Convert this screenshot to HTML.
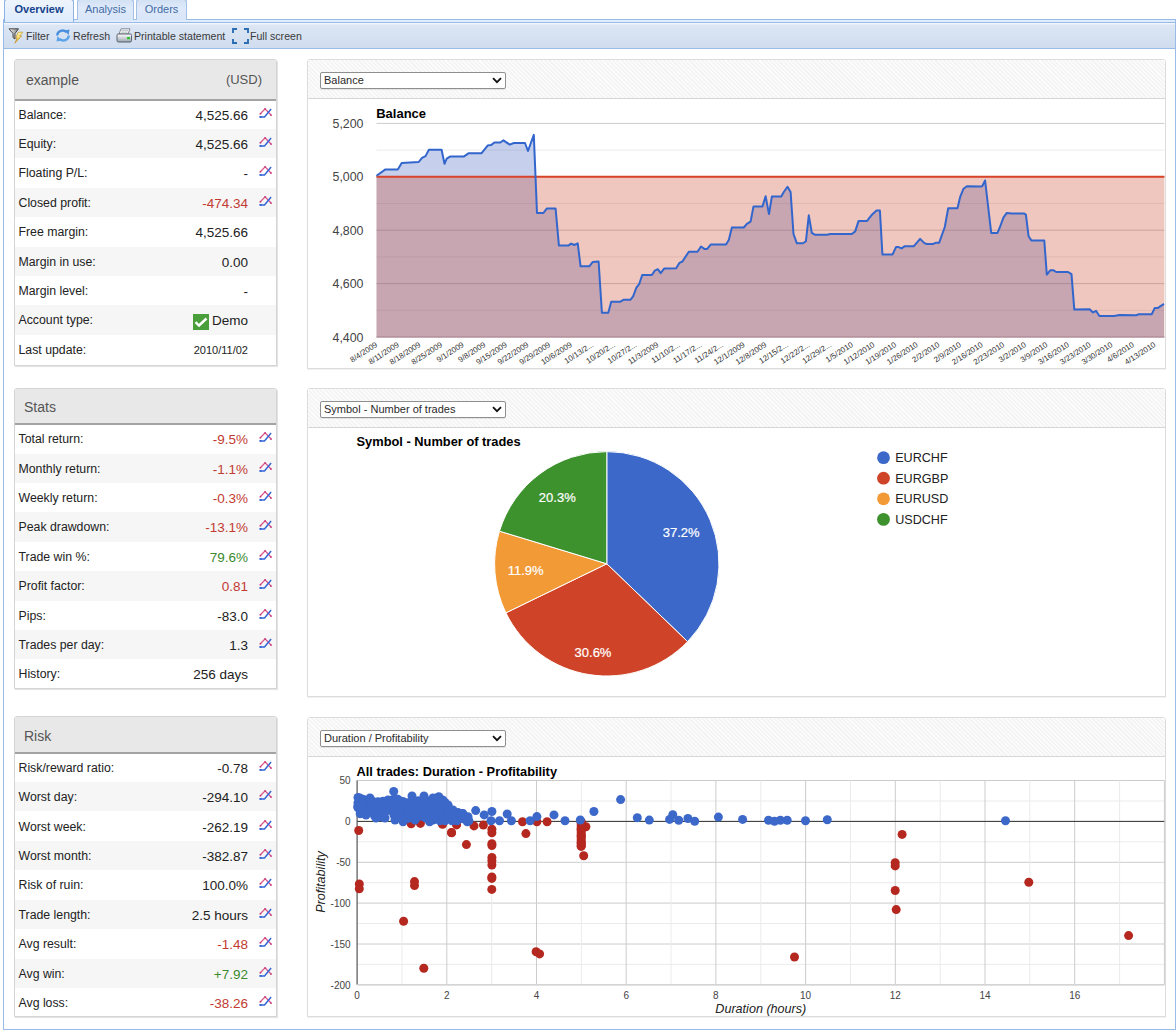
<!DOCTYPE html>
<html><head><meta charset="utf-8"><title>Overview</title><style>
*{box-sizing:border-box}
html,body{margin:0;padding:0}
body{width:1176px;height:1032px;overflow:hidden;position:relative;background:#fff;font-family:"Liberation Sans",sans-serif;color:#222}
.a{position:absolute}
.tab{position:absolute;top:-1px;height:21px;border:1px solid #a3c0e6;border-bottom:none;border-radius:3px 3px 0 0;background:linear-gradient(#d3e1f4,#dfeafa 40%,#d9e6f8);font-size:11px;color:#416aa3;text-align:center;line-height:19px}
.tab.act{background:linear-gradient(#eef4fc,#deecfd);color:#15428b;font-weight:bold;height:23px;z-index:3;border-color:#8db2e3}
.tb{font-size:10.6px;color:#3a3a3a;top:30px;line-height:13px}
.lp{position:absolute;left:14px;width:263px;border:1px solid #d4d4d4;border-radius:3px 3px 0 0;box-shadow:1px 1px 1px rgba(0,0,0,.12);background:#fff;overflow:hidden}
.lh{position:absolute;z-index:2;left:0;right:0;top:0;background:#e8e8e8;border-bottom:2px solid #a3a3a3;color:#555;font-size:14px}
.row{position:absolute;left:0;width:262px;height:29.4px;line-height:29.4px;font-size:12.3px}
.row.g{background:#f6f6f6}
.row .l{position:absolute;left:3.5px;top:1px;color:#222}
.row .v{position:absolute;right:29px;top:1px;font-size:13.5px;color:#222;text-align:right}
.row .v.r{color:#c23b32}
.row .v.gr{color:#3a8a2e}
.ic{position:absolute;left:244px;top:8px;width:14px;height:11px}
.rp{position:absolute;left:307px;width:859px;border:1px solid #dcdcdc;border-radius:3px 3px 0 0;background:#fff;box-shadow:0 1px 1px rgba(0,0,0,.06)}
.rh{position:absolute;left:0;right:0;top:0;border-bottom:1px solid #d6d6d6;background-color:#f8f8f8;background-image:repeating-linear-gradient(45deg,#fbfbfb 0 1.5px,#f4f4f4 1.5px 3px)}
.sel{position:absolute;left:12px;height:17px;border:1px solid #8f8f8f;border-radius:2px;background:#fff;font-size:11px;line-height:15px;padding-left:3px;color:#2a2a2a;box-shadow:0 1px 0 rgba(0,0,0,.08)}
.sel svg{position:absolute;right:3px;top:4px}
</style></head>
<body>
<div class="a" style="left:3px;top:19px;width:1173px;height:4px;background:#deecfd;border-top:1px solid #99bbe8;border-bottom:1px solid #99bbe8;border-left:1px solid #99bbe8;border-right:1px solid #99bbe8"></div><div class="tab act" style="left:4px;width:70px">Overview</div><div class="tab" style="left:77px;width:57px">Analysis</div><div class="tab" style="left:136px;width:51px">Orders</div><div class="a" style="left:3px;top:23px;width:1173px;height:26px;background:linear-gradient(#f2f6fc 0,#f2f6fc 1px,#dce6f4 2px,#d0ddef);border-left:1px solid #99bbe8;border-right:1px solid #99bbe8;border-bottom:1px solid #99bbe8"></div><div class="a" style="left:3px;top:49px;width:1173px;height:981px;border-left:1px solid #99bbe8;border-right:1px solid #99bbe8;border-bottom:1px solid #99bbe8"></div><svg class="a" style="left:8px;top:27px" width="16" height="17" viewBox="0 0 16 17"><defs><linearGradient id="fg" x1="0" y1="0" x2="1" y2="0"><stop offset="0" stop-color="#fafafa"/><stop offset="1" stop-color="#7a7a7a"/></linearGradient><linearGradient id="lg" x1="0" y1="0" x2="0" y2="1"><stop offset="0" stop-color="#fff6b0"/><stop offset="1" stop-color="#e8b830"/></linearGradient></defs>
<path d="M1,1.8 L10.5,1.8 L7,6.5 L7,12 L5,10.5 L5,6.5 Z" fill="url(#fg)" stroke="#3a3a3a" stroke-width="0.9"/>
<path d="M10.2,5.2 L14.8,5.2 L11.8,9 L13.6,9 L6.8,16.2 L9.2,11 L7.6,11 Z" fill="url(#lg)" stroke="#b8860b" stroke-width="0.6"/></svg>
<span class="a tb" style="left:26px">Filter</span>
<svg class="a" style="left:55px;top:28px" width="16" height="15" viewBox="0 0 16 15">
<path d="M2.2,7.5 C2.5,3 8,1 11.5,4.2" fill="none" stroke="#4a90dd" stroke-width="2.4"/><path d="M9.5,2.5 L14.5,1.5 L13.5,7 Z" fill="#4a90dd"/>
<path d="M13.8,7.5 C13.5,12 8,14 4.5,10.8" fill="none" stroke="#5aa2ea" stroke-width="2.4"/><path d="M6.5,12.5 L1.5,13.5 L2.5,8 Z" fill="#5aa2ea"/></svg>
<span class="a tb" style="left:73px">Refresh</span>
<svg class="a" style="left:116px;top:28px" width="16" height="15" viewBox="0 0 16 15"><defs><linearGradient id="pg" x1="0" y1="0" x2="0" y2="1"><stop offset="0" stop-color="#ffffff"/><stop offset="1" stop-color="#9aa3ad"/></linearGradient></defs>
<path d="M5,0.8 L14,0.8 L12,6 L3,6 Z" fill="#f6f6f6" stroke="#6b7280" stroke-width="0.8"/><path d="M5.5,2.6 L12,2.6 M5,4.2 L11.5,4.2" stroke="#9aa" stroke-width="0.6"/>
<path d="M2,6 L14.5,6 Q15.5,6 15.5,7.5 L15.5,12.5 Q15.5,14 14,14 L2.5,14 Q1,14 1,12.5 L1,7.5 Q1,6 2,6 Z" fill="url(#pg)" stroke="#4b5563" stroke-width="0.9"/>
<rect x="11" y="9" width="3" height="2.2" fill="#31c431"/></svg>
<span class="a tb" style="left:134px">Printable statement</span>
<svg class="a" style="left:232px;top:28px" width="17" height="16" viewBox="0 0 17 16" fill="none" stroke="#2a6db3" stroke-width="1.9">
<path d="M1,5 L1,1 L5,1 M12,1 L16,1 L16,5 M16,11 L16,15 L12,15 M5,15 L1,15 L1,11"/></svg>
<span class="a tb" style="left:250px">Full screen</span>
<div class="lp" style="top:59px;height:307px"><div class="lh" style="height:41px"><span class="a" style="left:11px;top:12px">example</span><span class="a" style="right:14px;top:12px;font-size:13px">(USD)</span></div><div class="row" style="top:39.60px"><span class="l">Balance:</span><span class="v ">4,525.66</span><svg class="ic" viewBox="0 0 14 11"><polyline points="1.3,5.7 6.1,0.9 12,7" fill="none" stroke="#d9548a" stroke-width="1.3"/><rect x="0.6" y="5" width="1.6" height="1.6" fill="#c63b78"/><rect x="5.3" y="0.2" width="1.6" height="1.6" fill="#c63b78"/><rect x="11.2" y="6.3" width="1.6" height="1.6" fill="#c63b78"/><polyline points="1,8.9 5.5,8.9 12.1,1" fill="none" stroke="#3566d6" stroke-width="1.5"/><rect x="0.4" y="8" width="2.2" height="1.8" fill="#3566d6"/></svg></div><div class="row g" style="top:69.00px"><span class="l">Equity:</span><span class="v ">4,525.66</span><svg class="ic" viewBox="0 0 14 11"><polyline points="1.3,5.7 6.1,0.9 12,7" fill="none" stroke="#d9548a" stroke-width="1.3"/><rect x="0.6" y="5" width="1.6" height="1.6" fill="#c63b78"/><rect x="5.3" y="0.2" width="1.6" height="1.6" fill="#c63b78"/><rect x="11.2" y="6.3" width="1.6" height="1.6" fill="#c63b78"/><polyline points="1,8.9 5.5,8.9 12.1,1" fill="none" stroke="#3566d6" stroke-width="1.5"/><rect x="0.4" y="8" width="2.2" height="1.8" fill="#3566d6"/></svg></div><div class="row" style="top:98.40px"><span class="l">Floating P/L:</span><span class="v ">-</span><svg class="ic" viewBox="0 0 14 11"><polyline points="1.3,5.7 6.1,0.9 12,7" fill="none" stroke="#d9548a" stroke-width="1.3"/><rect x="0.6" y="5" width="1.6" height="1.6" fill="#c63b78"/><rect x="5.3" y="0.2" width="1.6" height="1.6" fill="#c63b78"/><rect x="11.2" y="6.3" width="1.6" height="1.6" fill="#c63b78"/><polyline points="1,8.9 5.5,8.9 12.1,1" fill="none" stroke="#3566d6" stroke-width="1.5"/><rect x="0.4" y="8" width="2.2" height="1.8" fill="#3566d6"/></svg></div><div class="row g" style="top:127.80px"><span class="l">Closed profit:</span><span class="v r">-474.34</span><svg class="ic" viewBox="0 0 14 11"><polyline points="1.3,5.7 6.1,0.9 12,7" fill="none" stroke="#d9548a" stroke-width="1.3"/><rect x="0.6" y="5" width="1.6" height="1.6" fill="#c63b78"/><rect x="5.3" y="0.2" width="1.6" height="1.6" fill="#c63b78"/><rect x="11.2" y="6.3" width="1.6" height="1.6" fill="#c63b78"/><polyline points="1,8.9 5.5,8.9 12.1,1" fill="none" stroke="#3566d6" stroke-width="1.5"/><rect x="0.4" y="8" width="2.2" height="1.8" fill="#3566d6"/></svg></div><div class="row" style="top:157.20px"><span class="l">Free margin:</span><span class="v ">4,525.66</span></div><div class="row g" style="top:186.60px"><span class="l">Margin in use:</span><span class="v ">0.00</span></div><div class="row" style="top:216.00px"><span class="l">Margin level:</span><span class="v ">-</span></div><div class="row g" style="top:245.40px"><span class="l">Account type:</span><span class="v "><svg width="16" height="16" viewBox="0 0 16 16" style="position:relative;top:4.5px;margin-right:3px"><rect width="16" height="16" fill="#4a9f3b"/><polyline points="2.5,8.2 6,11.5 13.5,4.5" fill="none" stroke="#fff" stroke-width="2.4"/></svg>Demo</span></div><div class="row" style="top:274.80px"><span class="l">Last update:</span><span class="v "><span style="font-size:11px;position:relative;top:-1px">2010/11/02</span></span></div></div><div class="lp" style="top:388px;height:301px"><div class="lh" style="height:36px"><span class="a" style="left:9px;top:10px;font-size:14px">Stats</span></div><div class="row" style="top:35.20px"><span class="l">Total return:</span><span class="v r">-9.5%</span><svg class="ic" viewBox="0 0 14 11"><polyline points="1.3,5.7 6.1,0.9 12,7" fill="none" stroke="#d9548a" stroke-width="1.3"/><rect x="0.6" y="5" width="1.6" height="1.6" fill="#c63b78"/><rect x="5.3" y="0.2" width="1.6" height="1.6" fill="#c63b78"/><rect x="11.2" y="6.3" width="1.6" height="1.6" fill="#c63b78"/><polyline points="1,8.9 5.5,8.9 12.1,1" fill="none" stroke="#3566d6" stroke-width="1.5"/><rect x="0.4" y="8" width="2.2" height="1.8" fill="#3566d6"/></svg></div><div class="row g" style="top:64.60px"><span class="l">Monthly return:</span><span class="v r">-1.1%</span><svg class="ic" viewBox="0 0 14 11"><polyline points="1.3,5.7 6.1,0.9 12,7" fill="none" stroke="#d9548a" stroke-width="1.3"/><rect x="0.6" y="5" width="1.6" height="1.6" fill="#c63b78"/><rect x="5.3" y="0.2" width="1.6" height="1.6" fill="#c63b78"/><rect x="11.2" y="6.3" width="1.6" height="1.6" fill="#c63b78"/><polyline points="1,8.9 5.5,8.9 12.1,1" fill="none" stroke="#3566d6" stroke-width="1.5"/><rect x="0.4" y="8" width="2.2" height="1.8" fill="#3566d6"/></svg></div><div class="row" style="top:94.00px"><span class="l">Weekly return:</span><span class="v r">-0.3%</span><svg class="ic" viewBox="0 0 14 11"><polyline points="1.3,5.7 6.1,0.9 12,7" fill="none" stroke="#d9548a" stroke-width="1.3"/><rect x="0.6" y="5" width="1.6" height="1.6" fill="#c63b78"/><rect x="5.3" y="0.2" width="1.6" height="1.6" fill="#c63b78"/><rect x="11.2" y="6.3" width="1.6" height="1.6" fill="#c63b78"/><polyline points="1,8.9 5.5,8.9 12.1,1" fill="none" stroke="#3566d6" stroke-width="1.5"/><rect x="0.4" y="8" width="2.2" height="1.8" fill="#3566d6"/></svg></div><div class="row g" style="top:123.40px"><span class="l">Peak drawdown:</span><span class="v r">-13.1%</span><svg class="ic" viewBox="0 0 14 11"><polyline points="1.3,5.7 6.1,0.9 12,7" fill="none" stroke="#d9548a" stroke-width="1.3"/><rect x="0.6" y="5" width="1.6" height="1.6" fill="#c63b78"/><rect x="5.3" y="0.2" width="1.6" height="1.6" fill="#c63b78"/><rect x="11.2" y="6.3" width="1.6" height="1.6" fill="#c63b78"/><polyline points="1,8.9 5.5,8.9 12.1,1" fill="none" stroke="#3566d6" stroke-width="1.5"/><rect x="0.4" y="8" width="2.2" height="1.8" fill="#3566d6"/></svg></div><div class="row" style="top:152.80px"><span class="l">Trade win %:</span><span class="v gr">79.6%</span><svg class="ic" viewBox="0 0 14 11"><polyline points="1.3,5.7 6.1,0.9 12,7" fill="none" stroke="#d9548a" stroke-width="1.3"/><rect x="0.6" y="5" width="1.6" height="1.6" fill="#c63b78"/><rect x="5.3" y="0.2" width="1.6" height="1.6" fill="#c63b78"/><rect x="11.2" y="6.3" width="1.6" height="1.6" fill="#c63b78"/><polyline points="1,8.9 5.5,8.9 12.1,1" fill="none" stroke="#3566d6" stroke-width="1.5"/><rect x="0.4" y="8" width="2.2" height="1.8" fill="#3566d6"/></svg></div><div class="row g" style="top:182.20px"><span class="l">Profit factor:</span><span class="v r">0.81</span><svg class="ic" viewBox="0 0 14 11"><polyline points="1.3,5.7 6.1,0.9 12,7" fill="none" stroke="#d9548a" stroke-width="1.3"/><rect x="0.6" y="5" width="1.6" height="1.6" fill="#c63b78"/><rect x="5.3" y="0.2" width="1.6" height="1.6" fill="#c63b78"/><rect x="11.2" y="6.3" width="1.6" height="1.6" fill="#c63b78"/><polyline points="1,8.9 5.5,8.9 12.1,1" fill="none" stroke="#3566d6" stroke-width="1.5"/><rect x="0.4" y="8" width="2.2" height="1.8" fill="#3566d6"/></svg></div><div class="row" style="top:211.60px"><span class="l">Pips:</span><span class="v ">-83.0</span><svg class="ic" viewBox="0 0 14 11"><polyline points="1.3,5.7 6.1,0.9 12,7" fill="none" stroke="#d9548a" stroke-width="1.3"/><rect x="0.6" y="5" width="1.6" height="1.6" fill="#c63b78"/><rect x="5.3" y="0.2" width="1.6" height="1.6" fill="#c63b78"/><rect x="11.2" y="6.3" width="1.6" height="1.6" fill="#c63b78"/><polyline points="1,8.9 5.5,8.9 12.1,1" fill="none" stroke="#3566d6" stroke-width="1.5"/><rect x="0.4" y="8" width="2.2" height="1.8" fill="#3566d6"/></svg></div><div class="row g" style="top:241.00px"><span class="l">Trades per day:</span><span class="v ">1.3</span><svg class="ic" viewBox="0 0 14 11"><polyline points="1.3,5.7 6.1,0.9 12,7" fill="none" stroke="#d9548a" stroke-width="1.3"/><rect x="0.6" y="5" width="1.6" height="1.6" fill="#c63b78"/><rect x="5.3" y="0.2" width="1.6" height="1.6" fill="#c63b78"/><rect x="11.2" y="6.3" width="1.6" height="1.6" fill="#c63b78"/><polyline points="1,8.9 5.5,8.9 12.1,1" fill="none" stroke="#3566d6" stroke-width="1.5"/><rect x="0.4" y="8" width="2.2" height="1.8" fill="#3566d6"/></svg></div><div class="row" style="top:270.40px"><span class="l">History:</span><span class="v ">256 days</span></div></div><div class="lp" style="top:716px;height:301px"><div class="lh" style="height:37px"><span class="a" style="left:9px;top:11px;font-size:14px">Risk</span></div><div class="row" style="top:35.70px"><span class="l">Risk/reward ratio:</span><span class="v ">-0.78</span><svg class="ic" viewBox="0 0 14 11"><polyline points="1.3,5.7 6.1,0.9 12,7" fill="none" stroke="#d9548a" stroke-width="1.3"/><rect x="0.6" y="5" width="1.6" height="1.6" fill="#c63b78"/><rect x="5.3" y="0.2" width="1.6" height="1.6" fill="#c63b78"/><rect x="11.2" y="6.3" width="1.6" height="1.6" fill="#c63b78"/><polyline points="1,8.9 5.5,8.9 12.1,1" fill="none" stroke="#3566d6" stroke-width="1.5"/><rect x="0.4" y="8" width="2.2" height="1.8" fill="#3566d6"/></svg></div><div class="row g" style="top:65.10px"><span class="l">Worst day:</span><span class="v ">-294.10</span><svg class="ic" viewBox="0 0 14 11"><polyline points="1.3,5.7 6.1,0.9 12,7" fill="none" stroke="#d9548a" stroke-width="1.3"/><rect x="0.6" y="5" width="1.6" height="1.6" fill="#c63b78"/><rect x="5.3" y="0.2" width="1.6" height="1.6" fill="#c63b78"/><rect x="11.2" y="6.3" width="1.6" height="1.6" fill="#c63b78"/><polyline points="1,8.9 5.5,8.9 12.1,1" fill="none" stroke="#3566d6" stroke-width="1.5"/><rect x="0.4" y="8" width="2.2" height="1.8" fill="#3566d6"/></svg></div><div class="row" style="top:94.50px"><span class="l">Worst week:</span><span class="v ">-262.19</span><svg class="ic" viewBox="0 0 14 11"><polyline points="1.3,5.7 6.1,0.9 12,7" fill="none" stroke="#d9548a" stroke-width="1.3"/><rect x="0.6" y="5" width="1.6" height="1.6" fill="#c63b78"/><rect x="5.3" y="0.2" width="1.6" height="1.6" fill="#c63b78"/><rect x="11.2" y="6.3" width="1.6" height="1.6" fill="#c63b78"/><polyline points="1,8.9 5.5,8.9 12.1,1" fill="none" stroke="#3566d6" stroke-width="1.5"/><rect x="0.4" y="8" width="2.2" height="1.8" fill="#3566d6"/></svg></div><div class="row g" style="top:123.90px"><span class="l">Worst month:</span><span class="v ">-382.87</span><svg class="ic" viewBox="0 0 14 11"><polyline points="1.3,5.7 6.1,0.9 12,7" fill="none" stroke="#d9548a" stroke-width="1.3"/><rect x="0.6" y="5" width="1.6" height="1.6" fill="#c63b78"/><rect x="5.3" y="0.2" width="1.6" height="1.6" fill="#c63b78"/><rect x="11.2" y="6.3" width="1.6" height="1.6" fill="#c63b78"/><polyline points="1,8.9 5.5,8.9 12.1,1" fill="none" stroke="#3566d6" stroke-width="1.5"/><rect x="0.4" y="8" width="2.2" height="1.8" fill="#3566d6"/></svg></div><div class="row" style="top:153.30px"><span class="l">Risk of ruin:</span><span class="v ">100.0%</span><svg class="ic" viewBox="0 0 14 11"><polyline points="1.3,5.7 6.1,0.9 12,7" fill="none" stroke="#d9548a" stroke-width="1.3"/><rect x="0.6" y="5" width="1.6" height="1.6" fill="#c63b78"/><rect x="5.3" y="0.2" width="1.6" height="1.6" fill="#c63b78"/><rect x="11.2" y="6.3" width="1.6" height="1.6" fill="#c63b78"/><polyline points="1,8.9 5.5,8.9 12.1,1" fill="none" stroke="#3566d6" stroke-width="1.5"/><rect x="0.4" y="8" width="2.2" height="1.8" fill="#3566d6"/></svg></div><div class="row g" style="top:182.70px"><span class="l">Trade length:</span><span class="v ">2.5 hours</span><svg class="ic" viewBox="0 0 14 11"><polyline points="1.3,5.7 6.1,0.9 12,7" fill="none" stroke="#d9548a" stroke-width="1.3"/><rect x="0.6" y="5" width="1.6" height="1.6" fill="#c63b78"/><rect x="5.3" y="0.2" width="1.6" height="1.6" fill="#c63b78"/><rect x="11.2" y="6.3" width="1.6" height="1.6" fill="#c63b78"/><polyline points="1,8.9 5.5,8.9 12.1,1" fill="none" stroke="#3566d6" stroke-width="1.5"/><rect x="0.4" y="8" width="2.2" height="1.8" fill="#3566d6"/></svg></div><div class="row" style="top:212.10px"><span class="l">Avg result:</span><span class="v r">-1.48</span><svg class="ic" viewBox="0 0 14 11"><polyline points="1.3,5.7 6.1,0.9 12,7" fill="none" stroke="#d9548a" stroke-width="1.3"/><rect x="0.6" y="5" width="1.6" height="1.6" fill="#c63b78"/><rect x="5.3" y="0.2" width="1.6" height="1.6" fill="#c63b78"/><rect x="11.2" y="6.3" width="1.6" height="1.6" fill="#c63b78"/><polyline points="1,8.9 5.5,8.9 12.1,1" fill="none" stroke="#3566d6" stroke-width="1.5"/><rect x="0.4" y="8" width="2.2" height="1.8" fill="#3566d6"/></svg></div><div class="row g" style="top:241.50px"><span class="l">Avg win:</span><span class="v gr">+7.92</span><svg class="ic" viewBox="0 0 14 11"><polyline points="1.3,5.7 6.1,0.9 12,7" fill="none" stroke="#d9548a" stroke-width="1.3"/><rect x="0.6" y="5" width="1.6" height="1.6" fill="#c63b78"/><rect x="5.3" y="0.2" width="1.6" height="1.6" fill="#c63b78"/><rect x="11.2" y="6.3" width="1.6" height="1.6" fill="#c63b78"/><polyline points="1,8.9 5.5,8.9 12.1,1" fill="none" stroke="#3566d6" stroke-width="1.5"/><rect x="0.4" y="8" width="2.2" height="1.8" fill="#3566d6"/></svg></div><div class="row" style="top:270.90px"><span class="l">Avg loss:</span><span class="v r">-38.26</span><svg class="ic" viewBox="0 0 14 11"><polyline points="1.3,5.7 6.1,0.9 12,7" fill="none" stroke="#d9548a" stroke-width="1.3"/><rect x="0.6" y="5" width="1.6" height="1.6" fill="#c63b78"/><rect x="5.3" y="0.2" width="1.6" height="1.6" fill="#c63b78"/><rect x="11.2" y="6.3" width="1.6" height="1.6" fill="#c63b78"/><polyline points="1,8.9 5.5,8.9 12.1,1" fill="none" stroke="#3566d6" stroke-width="1.5"/><rect x="0.4" y="8" width="2.2" height="1.8" fill="#3566d6"/></svg></div></div><div class="rp" style="top:59px;height:310px"><div class="rh" style="height:39px"></div><div class="sel" style="top:12px;width:186px">Balance<svg width="10" height="7" viewBox="0 0 10 7"><polyline points="1,1.2 5,5.2 9,1.2" fill="none" stroke="#111" stroke-width="1.8"/></svg></div></div><div class="rp" style="top:388px;height:309px"><div class="rh" style="height:39px"></div><div class="sel" style="top:12px;width:186px">Symbol - Number of trades<svg width="10" height="7" viewBox="0 0 10 7"><polyline points="1,1.2 5,5.2 9,1.2" fill="none" stroke="#111" stroke-width="1.8"/></svg></div></div><div class="rp" style="top:717px;height:300px"><div class="rh" style="height:39px"></div><div class="sel" style="top:12px;width:186px">Duration / Profitability<svg width="10" height="7" viewBox="0 0 10 7"><polyline points="1,1.2 5,5.2 9,1.2" fill="none" stroke="#111" stroke-width="1.8"/></svg></div></div>
<svg class="a" style="left:0;top:0;z-index:5" width="1176" height="1032" viewBox="0 0 1176 1032" font-family="Liberation Sans, sans-serif"><line x1="376.5" x2="1164.4" y1="337.0" y2="337.0" stroke="#cccccc" stroke-width="1"/><line x1="376.5" x2="1164.4" y1="310.3" y2="310.3" stroke="#ebebeb" stroke-width="1"/><line x1="376.5" x2="1164.4" y1="283.6" y2="283.6" stroke="#cccccc" stroke-width="1"/><line x1="376.5" x2="1164.4" y1="256.9" y2="256.9" stroke="#ebebeb" stroke-width="1"/><line x1="376.5" x2="1164.4" y1="230.2" y2="230.2" stroke="#cccccc" stroke-width="1"/><line x1="376.5" x2="1164.4" y1="203.5" y2="203.5" stroke="#ebebeb" stroke-width="1"/><line x1="376.5" x2="1164.4" y1="176.8" y2="176.8" stroke="#cccccc" stroke-width="1"/><line x1="376.5" x2="1164.4" y1="150.1" y2="150.1" stroke="#ebebeb" stroke-width="1"/><line x1="376.5" x2="1164.4" y1="123.4" y2="123.4" stroke="#cccccc" stroke-width="1"/><text x="363.5" y="341.6" text-anchor="end" font-size="12.4" fill="#444">4,400</text><text x="363.5" y="288.2" text-anchor="end" font-size="12.4" fill="#444">4,600</text><text x="363.5" y="234.8" text-anchor="end" font-size="12.4" fill="#444">4,800</text><text x="363.5" y="181.4" text-anchor="end" font-size="12.4" fill="#444">5,000</text><text x="363.5" y="128.0" text-anchor="end" font-size="12.4" fill="#444">5,200</text><text x="376.2" y="117.8" font-size="13" font-weight="bold" fill="#000">Balance</text><polygon points="376.5,337.1 376.5,175.7 385.5,169.4 397.8,169.4 401.7,162.9 418.7,162.0 422.0,157.8 425.5,156.1 428.9,149.8 441.6,149.8 444.5,163.8 446.7,158.7 450.0,156.6 463.7,156.6 468.8,153.2 481.6,153.2 487.6,145.6 491.0,145.1 494.4,142.5 500.3,142.5 503.4,140.3 509.7,144.6 513.9,143.0 525.0,143.0 528.0,151.0 533.8,134.9 537.0,213.0 543.4,213.0 546.7,208.6 555.6,208.6 558.9,245.4 568.6,245.4 571.1,243.6 574.4,245.0 577.7,243.4 580.6,266.3 589.3,266.3 592.8,261.9 598.6,261.5 601.9,312.8 608.3,312.8 611.2,301.8 620.0,301.8 623.8,299.7 630.6,299.7 633.1,296.4 636.4,287.6 639.3,283.8 642.2,275.0 651.9,275.0 654.8,270.6 657.8,269.2 660.7,273.1 664.1,268.6 676.2,268.3 679.5,262.8 682.4,261.5 688.8,251.8 697.5,251.8 701.0,246.5 704.3,248.9 707.2,248.9 710.7,244.6 726.0,244.5 728.8,239.9 731.9,227.5 743.8,227.5 746.9,223.8 750.6,221.6 753.5,206.4 762.5,206.4 765.6,196.2 769.0,214.1 771.9,196.6 781.2,196.6 783.8,192.0 787.5,186.7 790.6,192.0 793.5,234.0 796.9,243.3 803.0,243.3 805.9,241.3 808.8,215.3 811.8,232.8 815.2,234.8 827.1,234.8 830.5,234.0 851.8,234.0 855.2,231.4 858.6,220.9 867.1,220.9 871.4,215.3 876.5,210.5 879.9,210.5 882.4,254.4 892.6,254.4 896.0,247.1 898.6,247.1 901.6,248.4 904.9,246.2 913.9,246.2 920.1,238.9 924.4,243.1 926.9,244.0 932.9,244.0 935.7,242.8 939.1,242.8 944.8,227.0 948.2,208.3 957.5,208.3 960.1,197.2 963.5,188.7 966.9,186.2 980.5,186.5 982.2,186.2 985.1,180.5 991.2,232.9 997.5,232.9 1000.0,227.0 1003.4,217.6 1006.8,212.9 1011.9,213.4 1023.8,213.4 1025.9,214.6 1028.6,236.3 1031.5,240.6 1044.3,240.6 1046.8,274.6 1050.2,270.3 1053.6,270.3 1056.2,272.0 1068.1,272.0 1071.5,274.1 1074.3,309.6 1089.6,309.3 1093.0,312.5 1096.0,310.8 1099.4,316.0 1114.2,316.0 1119.2,315.0 1136.0,315.2 1138.9,314.3 1151.7,314.3 1154.7,308.1 1157.6,308.1 1164.0,303.9 1164,337.1" fill="#4162c0" fill-opacity="0.3"/><rect x="376.5" y="176.8" width="787.9" height="160.3" fill="#ca442a" fill-opacity="0.3"/><line x1="376.5" x2="1164.4" y1="176.8" y2="176.8" stroke="#d8442a" stroke-width="2"/><polyline points="376.5,175.7 385.5,169.4 397.8,169.4 401.7,162.9 418.7,162.0 422.0,157.8 425.5,156.1 428.9,149.8 441.6,149.8 444.5,163.8 446.7,158.7 450.0,156.6 463.7,156.6 468.8,153.2 481.6,153.2 487.6,145.6 491.0,145.1 494.4,142.5 500.3,142.5 503.4,140.3 509.7,144.6 513.9,143.0 525.0,143.0 528.0,151.0 533.8,134.9 537.0,213.0 543.4,213.0 546.7,208.6 555.6,208.6 558.9,245.4 568.6,245.4 571.1,243.6 574.4,245.0 577.7,243.4 580.6,266.3 589.3,266.3 592.8,261.9 598.6,261.5 601.9,312.8 608.3,312.8 611.2,301.8 620.0,301.8 623.8,299.7 630.6,299.7 633.1,296.4 636.4,287.6 639.3,283.8 642.2,275.0 651.9,275.0 654.8,270.6 657.8,269.2 660.7,273.1 664.1,268.6 676.2,268.3 679.5,262.8 682.4,261.5 688.8,251.8 697.5,251.8 701.0,246.5 704.3,248.9 707.2,248.9 710.7,244.6 726.0,244.5 728.8,239.9 731.9,227.5 743.8,227.5 746.9,223.8 750.6,221.6 753.5,206.4 762.5,206.4 765.6,196.2 769.0,214.1 771.9,196.6 781.2,196.6 783.8,192.0 787.5,186.7 790.6,192.0 793.5,234.0 796.9,243.3 803.0,243.3 805.9,241.3 808.8,215.3 811.8,232.8 815.2,234.8 827.1,234.8 830.5,234.0 851.8,234.0 855.2,231.4 858.6,220.9 867.1,220.9 871.4,215.3 876.5,210.5 879.9,210.5 882.4,254.4 892.6,254.4 896.0,247.1 898.6,247.1 901.6,248.4 904.9,246.2 913.9,246.2 920.1,238.9 924.4,243.1 926.9,244.0 932.9,244.0 935.7,242.8 939.1,242.8 944.8,227.0 948.2,208.3 957.5,208.3 960.1,197.2 963.5,188.7 966.9,186.2 980.5,186.5 982.2,186.2 985.1,180.5 991.2,232.9 997.5,232.9 1000.0,227.0 1003.4,217.6 1006.8,212.9 1011.9,213.4 1023.8,213.4 1025.9,214.6 1028.6,236.3 1031.5,240.6 1044.3,240.6 1046.8,274.6 1050.2,270.3 1053.6,270.3 1056.2,272.0 1068.1,272.0 1071.5,274.1 1074.3,309.6 1089.6,309.3 1093.0,312.5 1096.0,310.8 1099.4,316.0 1114.2,316.0 1119.2,315.0 1136.0,315.2 1138.9,314.3 1151.7,314.3 1154.7,308.1 1157.6,308.1 1164.0,303.9" fill="none" stroke="#3366cc" stroke-width="2" stroke-linejoin="round"/><line x1="376.5" x2="1164.4" y1="337.1" y2="337.1" stroke="#b08a94" stroke-width="1"/><text transform="translate(378.0,346) rotate(-33)" text-anchor="end" font-size="7.9" fill="#333">8/4/2009</text><text transform="translate(399.6,346) rotate(-33)" text-anchor="end" font-size="7.9" fill="#333">8/11/2009</text><text transform="translate(421.2,346) rotate(-33)" text-anchor="end" font-size="7.9" fill="#333">8/18/2009</text><text transform="translate(442.9,346) rotate(-33)" text-anchor="end" font-size="7.9" fill="#333">8/25/2009</text><text transform="translate(464.5,346) rotate(-33)" text-anchor="end" font-size="7.9" fill="#333">9/1/2009</text><text transform="translate(486.1,346) rotate(-33)" text-anchor="end" font-size="7.9" fill="#333">9/8/2009</text><text transform="translate(507.7,346) rotate(-33)" text-anchor="end" font-size="7.9" fill="#333">9/15/2009</text><text transform="translate(529.3,346) rotate(-33)" text-anchor="end" font-size="7.9" fill="#333">9/22/2009</text><text transform="translate(551.0,346) rotate(-33)" text-anchor="end" font-size="7.9" fill="#333">9/29/2009</text><text transform="translate(572.6,346) rotate(-33)" text-anchor="end" font-size="7.9" fill="#333">10/6/2009</text><text transform="translate(594.2,346) rotate(-33)" text-anchor="end" font-size="7.9" fill="#333">10/13/2...</text><text transform="translate(615.8,346) rotate(-33)" text-anchor="end" font-size="7.9" fill="#333">10/20/2...</text><text transform="translate(637.4,346) rotate(-33)" text-anchor="end" font-size="7.9" fill="#333">10/27/2...</text><text transform="translate(659.1,346) rotate(-33)" text-anchor="end" font-size="7.9" fill="#333">11/3/2009</text><text transform="translate(680.7,346) rotate(-33)" text-anchor="end" font-size="7.9" fill="#333">11/10/2...</text><text transform="translate(702.3,346) rotate(-33)" text-anchor="end" font-size="7.9" fill="#333">11/17/2...</text><text transform="translate(723.9,346) rotate(-33)" text-anchor="end" font-size="7.9" fill="#333">11/24/2...</text><text transform="translate(745.5,346) rotate(-33)" text-anchor="end" font-size="7.9" fill="#333">12/1/2009</text><text transform="translate(767.2,346) rotate(-33)" text-anchor="end" font-size="7.9" fill="#333">12/8/2009</text><text transform="translate(788.8,346) rotate(-33)" text-anchor="end" font-size="7.9" fill="#333">12/15/2...</text><text transform="translate(810.4,346) rotate(-33)" text-anchor="end" font-size="7.9" fill="#333">12/22/2...</text><text transform="translate(832.0,346) rotate(-33)" text-anchor="end" font-size="7.9" fill="#333">12/29/2...</text><text transform="translate(853.6,346) rotate(-33)" text-anchor="end" font-size="7.9" fill="#333">1/5/2010</text><text transform="translate(875.3,346) rotate(-33)" text-anchor="end" font-size="7.9" fill="#333">1/12/2010</text><text transform="translate(896.9,346) rotate(-33)" text-anchor="end" font-size="7.9" fill="#333">1/19/2010</text><text transform="translate(918.5,346) rotate(-33)" text-anchor="end" font-size="7.9" fill="#333">1/26/2010</text><text transform="translate(940.1,346) rotate(-33)" text-anchor="end" font-size="7.9" fill="#333">2/2/2010</text><text transform="translate(961.7,346) rotate(-33)" text-anchor="end" font-size="7.9" fill="#333">2/9/2010</text><text transform="translate(983.4,346) rotate(-33)" text-anchor="end" font-size="7.9" fill="#333">2/16/2010</text><text transform="translate(1005.0,346) rotate(-33)" text-anchor="end" font-size="7.9" fill="#333">2/23/2010</text><text transform="translate(1026.6,346) rotate(-33)" text-anchor="end" font-size="7.9" fill="#333">3/2/2010</text><text transform="translate(1048.2,346) rotate(-33)" text-anchor="end" font-size="7.9" fill="#333">3/9/2010</text><text transform="translate(1069.8,346) rotate(-33)" text-anchor="end" font-size="7.9" fill="#333">3/16/2010</text><text transform="translate(1091.5,346) rotate(-33)" text-anchor="end" font-size="7.9" fill="#333">3/23/2010</text><text transform="translate(1113.1,346) rotate(-33)" text-anchor="end" font-size="7.9" fill="#333">3/30/2010</text><text transform="translate(1134.7,346) rotate(-33)" text-anchor="end" font-size="7.9" fill="#333">4/6/2010</text><text transform="translate(1156.3,346) rotate(-33)" text-anchor="end" font-size="7.9" fill="#333">4/13/2010</text><path d="M606.8,563.8 L606.80,451.60 A112.2,112.2 0 0 1 687.62,641.63 Z" fill="#3c69c9" stroke="#fff" stroke-width="1"/><path d="M606.8,563.8 L687.62,641.63 A112.2,112.2 0 0 1 505.89,612.84 Z" fill="#cf4428" stroke="#fff" stroke-width="1"/><path d="M606.8,563.8 L505.89,612.84 A112.2,112.2 0 0 1 499.46,531.15 Z" fill="#f19a36" stroke="#fff" stroke-width="1"/><path d="M606.8,563.8 L499.46,531.15 A112.2,112.2 0 0 1 606.80,451.60 Z" fill="#3d922e" stroke="#fff" stroke-width="1"/><text x="681.2" y="537" text-anchor="middle" font-size="13" fill="#fff" stroke="#fff" stroke-width="0.2">37.2%</text><text x="593" y="657" text-anchor="middle" font-size="13" fill="#fff" stroke="#fff" stroke-width="0.2">30.6%</text><text x="525.7" y="575" text-anchor="middle" font-size="13" fill="#fff" stroke="#fff" stroke-width="0.2">11.9%</text><text x="557.3" y="502" text-anchor="middle" font-size="13" fill="#fff" stroke="#fff" stroke-width="0.2">20.3%</text><text x="356.5" y="446.3" font-size="12.85" font-weight="bold" fill="#000">Symbol - Number of trades</text><circle cx="883.5" cy="457.7" r="6.4" fill="#3c69c9"/><text x="895.2" y="462.1" font-size="12.6" fill="#222">EURCHF</text><circle cx="883.5" cy="478.2" r="6.4" fill="#cf4428"/><text x="895.2" y="482.6" font-size="12.6" fill="#222">EURGBP</text><circle cx="883.5" cy="498.8" r="6.4" fill="#f19a36"/><text x="895.2" y="503.2" font-size="12.6" fill="#222">EURUSD</text><circle cx="883.5" cy="519.4" r="6.4" fill="#3d922e"/><text x="895.2" y="523.8" font-size="12.6" fill="#222">USDCHF</text><line x1="357.1" x2="1164.3" y1="984.8" y2="984.8" stroke="#cccccc"/><line x1="357.1" x2="1164.3" y1="964.4" y2="964.4" stroke="#ebebeb"/><line x1="357.1" x2="1164.3" y1="944.0" y2="944.0" stroke="#cccccc"/><line x1="357.1" x2="1164.3" y1="923.5" y2="923.5" stroke="#ebebeb"/><line x1="357.1" x2="1164.3" y1="903.1" y2="903.1" stroke="#cccccc"/><line x1="357.1" x2="1164.3" y1="882.7" y2="882.7" stroke="#ebebeb"/><line x1="357.1" x2="1164.3" y1="862.3" y2="862.3" stroke="#cccccc"/><line x1="357.1" x2="1164.3" y1="841.8" y2="841.8" stroke="#ebebeb"/><line x1="357.1" x2="1164.3" y1="821.4" y2="821.4" stroke="#cccccc"/><line x1="357.1" x2="1164.3" y1="801.0" y2="801.0" stroke="#ebebeb"/><line x1="357.1" x2="1164.3" y1="780.5" y2="780.5" stroke="#cccccc"/><line x1="402.0" x2="402.0" y1="780.5" y2="984.8" stroke="#ebebeb"/><line x1="446.8" x2="446.8" y1="780.5" y2="984.8" stroke="#cccccc"/><line x1="491.7" x2="491.7" y1="780.5" y2="984.8" stroke="#ebebeb"/><line x1="536.5" x2="536.5" y1="780.5" y2="984.8" stroke="#cccccc"/><line x1="581.4" x2="581.4" y1="780.5" y2="984.8" stroke="#ebebeb"/><line x1="626.2" x2="626.2" y1="780.5" y2="984.8" stroke="#cccccc"/><line x1="671.0" x2="671.0" y1="780.5" y2="984.8" stroke="#ebebeb"/><line x1="715.9" x2="715.9" y1="780.5" y2="984.8" stroke="#cccccc"/><line x1="760.8" x2="760.8" y1="780.5" y2="984.8" stroke="#ebebeb"/><line x1="805.6" x2="805.6" y1="780.5" y2="984.8" stroke="#cccccc"/><line x1="850.5" x2="850.5" y1="780.5" y2="984.8" stroke="#ebebeb"/><line x1="895.3" x2="895.3" y1="780.5" y2="984.8" stroke="#cccccc"/><line x1="940.2" x2="940.2" y1="780.5" y2="984.8" stroke="#ebebeb"/><line x1="985.0" x2="985.0" y1="780.5" y2="984.8" stroke="#cccccc"/><line x1="1029.8" x2="1029.8" y1="780.5" y2="984.8" stroke="#ebebeb"/><line x1="1074.7" x2="1074.7" y1="780.5" y2="984.8" stroke="#cccccc"/><line x1="1119.6" x2="1119.6" y1="780.5" y2="984.8" stroke="#ebebeb"/><line x1="1164.4" x2="1164.4" y1="780.5" y2="984.8" stroke="#cccccc"/><line x1="357.1" x2="1164.3" y1="821.4" y2="821.4" stroke="#333"/><line x1="357.1" x2="357.1" y1="780.5" y2="984.8" stroke="#555" stroke-width="1.2"/><line x1="357.1" x2="1164.3" y1="984.8" y2="984.8" stroke="#d4d4d4" stroke-width="1.5"/><text x="350.6" y="988.5" text-anchor="end" font-size="10" fill="#444">-200</text><text x="350.6" y="947.7" text-anchor="end" font-size="10" fill="#444">-150</text><text x="350.6" y="906.8" text-anchor="end" font-size="10" fill="#444">-100</text><text x="350.6" y="866.0" text-anchor="end" font-size="10" fill="#444">-50</text><text x="350.6" y="825.1" text-anchor="end" font-size="10" fill="#444">0</text><text x="350.6" y="784.2" text-anchor="end" font-size="10" fill="#444">50</text><text x="357.1" y="999" text-anchor="middle" font-size="10" fill="#444">0</text><text x="446.8" y="999" text-anchor="middle" font-size="10" fill="#444">2</text><text x="536.5" y="999" text-anchor="middle" font-size="10" fill="#444">4</text><text x="626.2" y="999" text-anchor="middle" font-size="10" fill="#444">6</text><text x="715.9" y="999" text-anchor="middle" font-size="10" fill="#444">8</text><text x="805.6" y="999" text-anchor="middle" font-size="10" fill="#444">10</text><text x="895.3" y="999" text-anchor="middle" font-size="10" fill="#444">12</text><text x="985.0" y="999" text-anchor="middle" font-size="10" fill="#444">14</text><text x="1074.7" y="999" text-anchor="middle" font-size="10" fill="#444">16</text><text x="356.5" y="775.5" font-size="12.8" font-weight="bold" fill="#000">All trades: Duration - Profitability</text><text x="760.8" y="1013" text-anchor="middle" font-size="12.6" font-style="italic" fill="#222">Duration (hours)</text><text transform="translate(324.5,882) rotate(-90)" text-anchor="middle" font-size="12.6" font-style="italic" fill="#222">Profitability</text><circle cx="358.7" cy="830.5" r="4.5" fill="#b5281f"/><circle cx="411.2" cy="823.7" r="4.5" fill="#b5281f"/><circle cx="420.4" cy="823.4" r="4.5" fill="#b5281f"/><circle cx="442.3" cy="823.7" r="4.5" fill="#b5281f"/><circle cx="451.5" cy="832.6" r="4.5" fill="#b5281f"/><circle cx="456.6" cy="824.9" r="4.5" fill="#b5281f"/><circle cx="442.6" cy="824.2" r="4.5" fill="#b5281f"/><circle cx="456.2" cy="823.4" r="4.5" fill="#b5281f"/><circle cx="451.6" cy="832.7" r="4.5" fill="#b5281f"/><circle cx="466.4" cy="844.6" r="4.5" fill="#b5281f"/><circle cx="474" cy="825.9" r="4.5" fill="#b5281f"/><circle cx="483.4" cy="825.1" r="4.5" fill="#b5281f"/><circle cx="491.9" cy="829.3" r="4.5" fill="#b5281f"/><circle cx="491.9" cy="832.7" r="4.5" fill="#b5281f"/><circle cx="491.9" cy="843.8" r="4.5" fill="#b5281f"/><circle cx="491.9" cy="845.5" r="4.5" fill="#b5281f"/><circle cx="491.9" cy="857.4" r="4.5" fill="#b5281f"/><circle cx="491.9" cy="860.8" r="4.5" fill="#b5281f"/><circle cx="491.9" cy="865" r="4.5" fill="#b5281f"/><circle cx="491.9" cy="877" r="4.5" fill="#b5281f"/><circle cx="522.5" cy="821.7" r="4.5" fill="#b5281f"/><circle cx="525.9" cy="833.6" r="4.5" fill="#b5281f"/><circle cx="536.9" cy="821.7" r="4.5" fill="#b5281f"/><circle cx="547.1" cy="821.7" r="4.5" fill="#b5281f"/><circle cx="581.2" cy="822.5" r="4.5" fill="#b5281f"/><circle cx="581.2" cy="829.3" r="4.5" fill="#b5281f"/><circle cx="581.2" cy="836.1" r="4.5" fill="#b5281f"/><circle cx="581.2" cy="842.9" r="4.5" fill="#b5281f"/><circle cx="581.2" cy="846.3" r="4.5" fill="#b5281f"/><circle cx="585.9" cy="826.8" r="4.5" fill="#b5281f"/><circle cx="583.7" cy="855.7" r="4.5" fill="#b5281f"/><circle cx="359.3" cy="884" r="4.5" fill="#b5281f"/><circle cx="359.3" cy="888.7" r="4.5" fill="#b5281f"/><circle cx="414.5" cy="881.6" r="4.5" fill="#b5281f"/><circle cx="414.5" cy="885.6" r="4.5" fill="#b5281f"/><circle cx="403.6" cy="921.2" r="4.5" fill="#b5281f"/><circle cx="423.8" cy="968.3" r="4.5" fill="#b5281f"/><circle cx="491.8" cy="878.4" r="4.5" fill="#b5281f"/><circle cx="491.8" cy="889.4" r="4.5" fill="#b5281f"/><circle cx="536.1" cy="951.7" r="4.5" fill="#b5281f"/><circle cx="539.6" cy="953.9" r="4.5" fill="#b5281f"/><circle cx="902.1" cy="834.4" r="4.5" fill="#b5281f"/><circle cx="895.2" cy="862.7" r="4.5" fill="#b5281f"/><circle cx="895.2" cy="865.9" r="4.5" fill="#b5281f"/><circle cx="895.2" cy="890.5" r="4.5" fill="#b5281f"/><circle cx="896.2" cy="909.6" r="4.5" fill="#b5281f"/><circle cx="1028.8" cy="882.3" r="4.5" fill="#b5281f"/><circle cx="794.5" cy="957" r="4.5" fill="#b5281f"/><circle cx="1128.6" cy="935.6" r="4.5" fill="#b5281f"/><circle cx="581.2" cy="822" r="4.5" fill="#b5281f"/><circle cx="581.2" cy="824" r="4.5" fill="#b5281f"/><circle cx="581.2" cy="826" r="4.5" fill="#b5281f"/><circle cx="581.2" cy="828" r="4.5" fill="#b5281f"/><circle cx="581.2" cy="830" r="4.5" fill="#b5281f"/><circle cx="581.2" cy="832" r="4.5" fill="#b5281f"/><circle cx="581.2" cy="834" r="4.5" fill="#b5281f"/><circle cx="581.2" cy="836" r="4.5" fill="#b5281f"/><circle cx="581.2" cy="838" r="4.5" fill="#b5281f"/><circle cx="581.2" cy="840" r="4.5" fill="#b5281f"/><circle cx="581.2" cy="842" r="4.5" fill="#b5281f"/><circle cx="581.2" cy="844" r="4.5" fill="#b5281f"/><circle cx="581.2" cy="846" r="4.5" fill="#b5281f"/><circle cx="358.0" cy="797.4" r="4.5" fill="#3c68c9"/><circle cx="358.0" cy="802.6" r="4.5" fill="#3c68c9"/><circle cx="358.0" cy="807.8" r="4.5" fill="#3c68c9"/><circle cx="363.0" cy="799.2" r="4.5" fill="#3c68c9"/><circle cx="363.0" cy="804.4" r="4.5" fill="#3c68c9"/><circle cx="363.0" cy="809.6" r="4.5" fill="#3c68c9"/><circle cx="368.0" cy="801.0" r="4.5" fill="#3c68c9"/><circle cx="368.0" cy="806.2" r="4.5" fill="#3c68c9"/><circle cx="368.0" cy="811.4" r="4.5" fill="#3c68c9"/><circle cx="373.0" cy="801.4" r="4.5" fill="#3c68c9"/><circle cx="373.0" cy="806.6" r="4.5" fill="#3c68c9"/><circle cx="373.0" cy="811.8" r="4.5" fill="#3c68c9"/><circle cx="378.0" cy="801.8" r="4.5" fill="#3c68c9"/><circle cx="378.0" cy="807.0" r="4.5" fill="#3c68c9"/><circle cx="378.0" cy="812.2" r="4.5" fill="#3c68c9"/><circle cx="383.0" cy="801.2" r="4.5" fill="#3c68c9"/><circle cx="383.0" cy="806.5" r="4.5" fill="#3c68c9"/><circle cx="383.0" cy="811.7" r="4.5" fill="#3c68c9"/><circle cx="388.0" cy="800.0" r="4.5" fill="#3c68c9"/><circle cx="388.0" cy="805.2" r="4.5" fill="#3c68c9"/><circle cx="388.0" cy="810.4" r="4.5" fill="#3c68c9"/><circle cx="393.0" cy="799.4" r="4.5" fill="#3c68c9"/><circle cx="393.0" cy="804.6" r="4.5" fill="#3c68c9"/><circle cx="393.0" cy="809.8" r="4.5" fill="#3c68c9"/><circle cx="398.0" cy="799.4" r="4.5" fill="#3c68c9"/><circle cx="398.0" cy="804.6" r="4.5" fill="#3c68c9"/><circle cx="398.0" cy="809.8" r="4.5" fill="#3c68c9"/><circle cx="398.0" cy="815.0" r="4.5" fill="#3c68c9"/><circle cx="403.0" cy="801.4" r="4.5" fill="#3c68c9"/><circle cx="403.0" cy="806.6" r="4.5" fill="#3c68c9"/><circle cx="403.0" cy="811.8" r="4.5" fill="#3c68c9"/><circle cx="403.0" cy="817.0" r="4.5" fill="#3c68c9"/><circle cx="408.0" cy="802.8" r="4.5" fill="#3c68c9"/><circle cx="408.0" cy="808.0" r="4.5" fill="#3c68c9"/><circle cx="408.0" cy="813.2" r="4.5" fill="#3c68c9"/><circle cx="408.0" cy="818.4" r="4.5" fill="#3c68c9"/><circle cx="413.0" cy="801.9" r="4.5" fill="#3c68c9"/><circle cx="413.0" cy="807.1" r="4.5" fill="#3c68c9"/><circle cx="413.0" cy="812.3" r="4.5" fill="#3c68c9"/><circle cx="413.0" cy="817.5" r="4.5" fill="#3c68c9"/><circle cx="418.0" cy="801.0" r="4.5" fill="#3c68c9"/><circle cx="418.0" cy="806.2" r="4.5" fill="#3c68c9"/><circle cx="418.0" cy="811.4" r="4.5" fill="#3c68c9"/><circle cx="418.0" cy="816.6" r="4.5" fill="#3c68c9"/><circle cx="423.0" cy="801.0" r="4.5" fill="#3c68c9"/><circle cx="423.0" cy="806.2" r="4.5" fill="#3c68c9"/><circle cx="423.0" cy="811.4" r="4.5" fill="#3c68c9"/><circle cx="423.0" cy="816.6" r="4.5" fill="#3c68c9"/><circle cx="428.0" cy="801.0" r="4.5" fill="#3c68c9"/><circle cx="428.0" cy="806.2" r="4.5" fill="#3c68c9"/><circle cx="428.0" cy="811.4" r="4.5" fill="#3c68c9"/><circle cx="428.0" cy="816.6" r="4.5" fill="#3c68c9"/><circle cx="433.0" cy="799.2" r="4.5" fill="#3c68c9"/><circle cx="433.0" cy="804.4" r="4.5" fill="#3c68c9"/><circle cx="433.0" cy="809.6" r="4.5" fill="#3c68c9"/><circle cx="433.0" cy="814.8" r="4.5" fill="#3c68c9"/><circle cx="433.0" cy="820.0" r="4.5" fill="#3c68c9"/><circle cx="438.0" cy="797.4" r="4.5" fill="#3c68c9"/><circle cx="438.0" cy="802.6" r="4.5" fill="#3c68c9"/><circle cx="438.0" cy="807.8" r="4.5" fill="#3c68c9"/><circle cx="438.0" cy="813.0" r="4.5" fill="#3c68c9"/><circle cx="438.0" cy="818.2" r="4.5" fill="#3c68c9"/><circle cx="443.0" cy="800.3" r="4.5" fill="#3c68c9"/><circle cx="443.0" cy="805.5" r="4.5" fill="#3c68c9"/><circle cx="443.0" cy="810.7" r="4.5" fill="#3c68c9"/><circle cx="443.0" cy="815.9" r="4.5" fill="#3c68c9"/><circle cx="448.0" cy="805.0" r="4.5" fill="#3c68c9"/><circle cx="448.0" cy="810.2" r="4.5" fill="#3c68c9"/><circle cx="448.0" cy="815.4" r="4.5" fill="#3c68c9"/><circle cx="453.0" cy="810.0" r="4.5" fill="#3c68c9"/><circle cx="453.0" cy="815.2" r="4.5" fill="#3c68c9"/><circle cx="458.0" cy="812.4" r="4.5" fill="#3c68c9"/><circle cx="458.0" cy="817.6" r="4.5" fill="#3c68c9"/><circle cx="463.0" cy="813.6" r="4.5" fill="#3c68c9"/><circle cx="463.0" cy="818.8" r="4.5" fill="#3c68c9"/><circle cx="468.0" cy="816.8" r="4.5" fill="#3c68c9"/><circle cx="393.7" cy="791.4" r="4.5" fill="#3c68c9"/><circle cx="396.9" cy="798.9" r="4.5" fill="#3c68c9"/><circle cx="359.7" cy="797.9" r="4.5" fill="#3c68c9"/><circle cx="357.7" cy="806.5" r="4.5" fill="#3c68c9"/><circle cx="360.2" cy="813.7" r="4.5" fill="#3c68c9"/><circle cx="367.9" cy="801.9" r="4.5" fill="#3c68c9"/><circle cx="374.5" cy="815.7" r="4.5" fill="#3c68c9"/><circle cx="381.6" cy="802.4" r="4.5" fill="#3c68c9"/><circle cx="381.6" cy="816.7" r="4.5" fill="#3c68c9"/><circle cx="388.3" cy="800.4" r="4.5" fill="#3c68c9"/><circle cx="393.9" cy="814.7" r="4.5" fill="#3c68c9"/><circle cx="407.1" cy="803.5" r="4.5" fill="#3c68c9"/><circle cx="403.1" cy="821.8" r="4.5" fill="#3c68c9"/><circle cx="418.4" cy="800.9" r="4.5" fill="#3c68c9"/><circle cx="427.6" cy="801.4" r="4.5" fill="#3c68c9"/><circle cx="438.8" cy="796.8" r="4.5" fill="#3c68c9"/><circle cx="444.9" cy="802.4" r="4.5" fill="#3c68c9"/><circle cx="429.6" cy="821.8" r="4.5" fill="#3c68c9"/><circle cx="421.4" cy="813.7" r="4.5" fill="#3c68c9"/><circle cx="439.8" cy="820.8" r="4.5" fill="#3c68c9"/><circle cx="462.2" cy="813.7" r="4.5" fill="#3c68c9"/><circle cx="452" cy="820.8" r="4.5" fill="#3c68c9"/><circle cx="467.3" cy="821.8" r="4.5" fill="#3c68c9"/><circle cx="365" cy="808" r="4.5" fill="#3c68c9"/><circle cx="372" cy="806" r="4.5" fill="#3c68c9"/><circle cx="385" cy="810" r="4.5" fill="#3c68c9"/><circle cx="398" cy="808" r="4.5" fill="#3c68c9"/><circle cx="410" cy="812" r="4.5" fill="#3c68c9"/><circle cx="415" cy="806" r="4.5" fill="#3c68c9"/><circle cx="432" cy="810" r="4.5" fill="#3c68c9"/><circle cx="436" cy="816" r="4.5" fill="#3c68c9"/><circle cx="448" cy="806" r="4.5" fill="#3c68c9"/><circle cx="455" cy="815" r="4.5" fill="#3c68c9"/><circle cx="408" cy="818" r="4.5" fill="#3c68c9"/><circle cx="415" cy="820" r="4.5" fill="#3c68c9"/><circle cx="395" cy="820" r="4.5" fill="#3c68c9"/><circle cx="378" cy="812" r="4.5" fill="#3c68c9"/><circle cx="366" cy="815" r="4.5" fill="#3c68c9"/><circle cx="362" cy="803" r="4.5" fill="#3c68c9"/><circle cx="370" cy="798" r="4.5" fill="#3c68c9"/><circle cx="362" cy="805" r="4.5" fill="#3c68c9"/><circle cx="376" cy="818" r="4.5" fill="#3c68c9"/><circle cx="385" cy="818" r="4.5" fill="#3c68c9"/><circle cx="412" cy="796" r="4.5" fill="#3c68c9"/><circle cx="424" cy="796" r="4.5" fill="#3c68c9"/><circle cx="433" cy="798" r="4.5" fill="#3c68c9"/><circle cx="440" cy="812" r="4.5" fill="#3c68c9"/><circle cx="426" cy="818" r="4.5" fill="#3c68c9"/><circle cx="440" cy="798.7" r="4.5" fill="#3c68c9"/><circle cx="444.3" cy="802.1" r="4.5" fill="#3c68c9"/><circle cx="450.2" cy="813.2" r="4.5" fill="#3c68c9"/><circle cx="462.1" cy="814" r="4.5" fill="#3c68c9"/><circle cx="475.7" cy="810.6" r="4.5" fill="#3c68c9"/><circle cx="484.2" cy="814.9" r="4.5" fill="#3c68c9"/><circle cx="491.9" cy="811.5" r="4.5" fill="#3c68c9"/><circle cx="507.2" cy="814" r="4.5" fill="#3c68c9"/><circle cx="536.9" cy="816.6" r="4.5" fill="#3c68c9"/><circle cx="554" cy="814.9" r="4.5" fill="#3c68c9"/><circle cx="593.9" cy="811.5" r="4.5" fill="#3c68c9"/><circle cx="620.6" cy="799.6" r="4.5" fill="#3c68c9"/><circle cx="637.3" cy="817.8" r="4.5" fill="#3c68c9"/><circle cx="445.1" cy="820.8" r="4.5" fill="#3c68c9"/><circle cx="457" cy="820.8" r="4.5" fill="#3c68c9"/><circle cx="468.9" cy="820.8" r="4.5" fill="#3c68c9"/><circle cx="491" cy="820.8" r="4.5" fill="#3c68c9"/><circle cx="499.5" cy="820.8" r="4.5" fill="#3c68c9"/><circle cx="511.4" cy="820.8" r="4.5" fill="#3c68c9"/><circle cx="530.1" cy="820.8" r="4.5" fill="#3c68c9"/><circle cx="565" cy="820.8" r="4.5" fill="#3c68c9"/><circle cx="580.3" cy="820" r="4.5" fill="#3c68c9"/><circle cx="649.3" cy="820.1" r="4.5" fill="#3c68c9"/><circle cx="669.6" cy="819.4" r="4.5" fill="#3c68c9"/><circle cx="672.8" cy="814.8" r="4.5" fill="#3c68c9"/><circle cx="678.7" cy="820.3" r="4.5" fill="#3c68c9"/><circle cx="687.9" cy="818.5" r="4.5" fill="#3c68c9"/><circle cx="694.7" cy="821.2" r="4.5" fill="#3c68c9"/><circle cx="718.4" cy="817.1" r="4.5" fill="#3c68c9"/><circle cx="742.6" cy="819.4" r="4.5" fill="#3c68c9"/><circle cx="768.5" cy="820.3" r="4.5" fill="#3c68c9"/><circle cx="774.5" cy="821.2" r="4.5" fill="#3c68c9"/><circle cx="780.4" cy="820.3" r="4.5" fill="#3c68c9"/><circle cx="787.2" cy="820.3" r="4.5" fill="#3c68c9"/><circle cx="805.5" cy="820.8" r="4.5" fill="#3c68c9"/><circle cx="827.3" cy="819.8" r="4.5" fill="#3c68c9"/><circle cx="1005.5" cy="820.8" r="4.5" fill="#3c68c9"/></svg>
</body></html>
